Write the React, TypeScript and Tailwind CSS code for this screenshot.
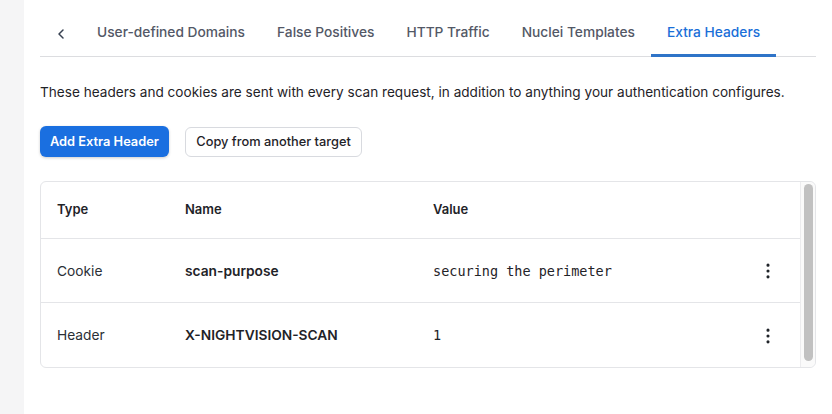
import { ChevronLeft, EllipsisVertical } from "lucide-react";

const tabs = [
  "User-defined Domains",
  "False Positives",
  "HTTP Traffic",
  "Nuclei Templates",
  "Extra Headers",
];

const rows = [
  { type: "Cookie", name: "scan-purpose", value: "securing the perimeter" },
  { type: "Header", name: "X-NIGHTVISION-SCAN", value: "1" },
];

const App = () => {
  return (
    <div className="flex w-[832px] h-[414px] bg-white font-['Inter','Liberation_Sans',sans-serif] overflow-hidden">
      {/* Sidebar strip */}
      <div className="w-6 shrink-0 bg-[#f5f5f6]" />

      {/* Main */}
      <div className="flex-1 px-4 pt-[11px]">
        {/* Tabs */}
        <div className="flex h-[46px] items-stretch border-b border-[#dcdde0]">
          <button className="w-[41px] flex items-center justify-center text-[#374151]">
            <ChevronLeft size={16} strokeWidth={2.25} />
          </button>
          {tabs.map((t) => {
            const active = t === "Extra Headers";
            return (
              <div
                key={t}
                className={`px-4 flex items-center text-[13.75px] font-medium -mb-px border-b-[3px] ${
                  active
                    ? "text-[#1a6fd8] border-[#2f74c8]"
                    : "text-[#535866] border-transparent"
                }`}
              >
                {t}
              </div>
            );
          })}
        </div>

        <p className="mt-[25px] text-[13.6px] leading-5 text-[#1f2328]">
          These headers and cookies are sent with every scan request, in addition to anything your authentication configures.
        </p>

        {/* Buttons */}
        <div className="mt-6 flex items-center gap-4">
          <button className="h-[31px] px-[10px] rounded-md bg-[#1a6fe0] text-white text-[12.8px] font-semibold shadow-[0_1px_3px_rgba(0,0,0,0.2)]">
            Add Extra Header
          </button>
          <button className="h-[30px] px-[10.5px] rounded-md border border-[#d8dadf] bg-white text-[12.8px] font-medium text-[#1f2328]">
            Copy from another target
          </button>
        </div>

        {/* Table */}
        <div className="mt-6 flex h-[187px] rounded-md border border-[#e4e5e8]">
          <div className="flex-1">
            <div className="grid grid-cols-[128px_248px_1fr_48px] items-center h-[57px] px-4 border-b border-[#e4e5e8] text-[13px] font-semibold text-[#1f2328]">
              <div>Type</div>
              <div>Name</div>
              <div>Value</div>
              <div />
            </div>
            {rows.map((r, i) => (
              <div
                key={r.name}
                className={`grid grid-cols-[128px_248px_1fr_48px] items-center h-[64px] px-4 pt-px ${
                  i === 0 ? "border-b border-[#e4e5e8]" : ""
                }`}
              >
                <div className="text-[13.75px] text-[#2b2f36]">{r.type}</div>
                <div className="text-[13.75px] font-semibold text-[#1f2328]">{r.name}</div>
                <div className="font-['DejaVu_Sans_Mono',monospace] text-[13.5px] text-[#1f2328]">
                  {r.value}
                </div>
                <div className="flex justify-end pr-[6px] text-[#1f2328]">
                  <EllipsisVertical size={20} strokeWidth={1.75} />
                </div>
              </div>
            ))}
          </div>
          {/* Scrollbar */}
          <div className="w-[15px] border-l border-[#ececee] bg-[#fafafa] flex justify-center pt-[2px] pb-[6px] rounded-r-md">
            <div className="w-[9px] h-full rounded-full bg-[#c1c1c1]" />
          </div>
        </div>
      </div>
    </div>
  );
};

export default App;
